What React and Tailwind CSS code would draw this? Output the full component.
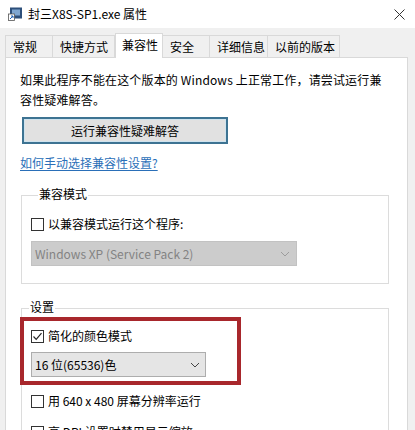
import { useState } from "react";

const tabs = [
  { label: "常规", w: "w-[48px]" },
  { label: "快捷方式", w: "w-[62px]" },
  { label: "兼容性", w: "w-[48px]", active: true },
  { label: "安全", w: "w-[47px]" },
  { label: "详细信息", w: "w-[58px]" },
  { label: "以前的版本", w: "w-[72px]" },
];

function Chevron({ color }) {
  return (
    <svg width="10" height="6" viewBox="0 0 10 6" className="shrink-0">
      <path d="M1 1 L5 5 L9 1" fill="none" stroke={color} strokeWidth="1" />
    </svg>
  );
}

function Checkbox({ checked, label, onToggle }) {
  return (
    <div className="flex items-center h-[16px] cursor-default" onClick={onToggle}>
      <div className="w-[13px] h-[13px] border border-[#333] bg-white flex items-center justify-center shrink-0">
        {checked && (
          <svg width="11" height="11" viewBox="0 0 11 11">
            <path d="M1.5 5.5 L4.2 8.3 L9.5 2.2" fill="none" stroke="#222" strokeWidth="1.2" />
          </svg>
        )}
      </div>
      <span className="ml-[4px] leading-[16px]">{label}</span>
    </div>
  );
}

function Group({ title, children, className }) {
  return (
    <div className={`border border-[#dcdcdc] ml-[1px] w-[368px] ${className}`}>
      <div className="-mt-[10px] ml-[7px] w-fit bg-white px-[1px] leading-[16px]">
        {title}
      </div>
      {children}
    </div>
  );
}

export default function App() {
  const [compat, setCompat] = useState(false);
  const [reduced, setReduced] = useState(true);
  const [lowRes, setLowRes] = useState(false);
  const [dpi, setDpi] = useState(false);

  return (
    <div className="w-[415px] h-[430px] overflow-hidden bg-[#f0f0f0] text-[12px] text-black font-['Noto_Sans_CJK_SC',sans-serif]">
      {/* title bar */}
      <div className="h-[28px] bg-white flex items-center pl-[8px] pr-[10px]">
        <svg width="15" height="14" viewBox="0 0 15 14" className="shrink-0">
          <rect x="2" y="0.5" width="12" height="11" fill="#2d4f7a" />
          <rect x="4" y="2.5" width="8" height="6" fill="#7fa6d0" />
          <rect x="0.5" y="7" width="6" height="6.5" fill="#fff" stroke="#555" strokeWidth="0.8" />
          <path d="M2 12 L5 9 M3 9 L5 9 L5 11" fill="none" stroke="#1d5fb5" strokeWidth="1" />
        </svg>
        <span className="ml-[5px] leading-[16px]">封三X8S-SP1.exe 属性</span>
        <svg width="11" height="11" viewBox="0 0 11 11" className="ml-auto">
          <path d="M0.5 0.5 L10.5 10.5 M10.5 0.5 L0.5 10.5" stroke="#333" strokeWidth="1" />
        </svg>
      </div>

      {/* tabs */}
      <div className="flex items-end h-[29px] pl-[5px]">
        {tabs.map((t) =>
          t.active ? (
            <div
              key={t.label}
              className={`${t.w} h-[25px] -mb-[1px] bg-white border border-b-0 border-[#d9d9d9] pl-[6px] leading-[22px] relative z-10`}
            >
              {t.label}
            </div>
          ) : (
            <div
              key={t.label}
              className={`${t.w} h-[22px] border border-b-0 border-l-0 first:border-l border-[#d9d9d9] pl-[7px] leading-[21px]`}
            >
              {t.label}
            </div>
          )
        )}
      </div>

      {/* panel */}
      <div className="ml-[5px] w-[403px] h-[400px] bg-white border border-[#d9d9d9] pl-[14px] pt-[12px]">
        <p className="leading-[20px] w-[375px] tracking-[0.15px]">
          如果此程序不能在这个版本的 Windows 上正常工作，请尝试运行兼
          <br />
          容性疑难解答。
        </p>
        <button className="mt-[7px] ml-[2px] w-[206px] h-[27px] border-2 border-[#3d7392] bg-[#e1e1e1] shadow-[inset_0_0_0_1px_#cfe3ee] leading-[20px]">
          运行兼容性疑难解答
        </button>
        <div className="mt-[9px] leading-[20px]">
          <span className="text-[#2a6fb8] underline underline-offset-2 decoration-[#2a6fb8] cursor-pointer">
            如何手动选择兼容性设置?
          </span>
        </div>

        <Group title="兼容模式" className="mt-[22px] pl-[9px] pb-[17px]">
          <div className="mt-[14px]">
            <Checkbox
              checked={compat}
              label="以兼容模式运行这个程序:"
              onToggle={() => setCompat(!compat)}
            />
          </div>
          <div className="mt-[9px] w-[266px] h-[25px] bg-[#cccccc] border border-[#c2c2c2] flex items-center pl-[3px] pr-[6px] text-[#838383]">
            <span className="leading-[16px]">Windows XP (Service Pack 2)</span>
            <span className="ml-auto">
              <Chevron color="#9c9c9c" />
            </span>
          </div>
        </Group>

        <Group title="设置" className="mt-[24px] pb-[20px]">
          <div className="mt-[2px] -ml-[2px] w-[221px] border-[4px] border-[#a8272c] pl-[7px] pt-[7px] pb-[4px]">
            <Checkbox
              checked={reduced}
              label="简化的颜色模式"
              onToggle={() => setReduced(!reduced)}
            />
            <div className="mt-[8px] w-[175px] h-[25px] bg-[#e5e5e5] border border-[#adadad] flex items-center pl-[3px] pr-[5px]">
              <span className="leading-[16px]">16 位(65536)色</span>
              <span className="ml-auto">
                <Chevron color="#444" />
              </span>
            </div>
          </div>
          <div className="pl-[9px]">
            <div className="mt-[8px]">
              <Checkbox
                checked={lowRes}
                label="用 640 x 480 屏幕分辨率运行"
                onToggle={() => setLowRes(!lowRes)}
              />
            </div>
            <div className="mt-[15px]">
              <Checkbox
                checked={dpi}
                label="高 DPI 设置时禁用显示缩放"
                onToggle={() => setDpi(!dpi)}
              />
            </div>
          </div>
        </Group>
      </div>
    </div>
  );
}
